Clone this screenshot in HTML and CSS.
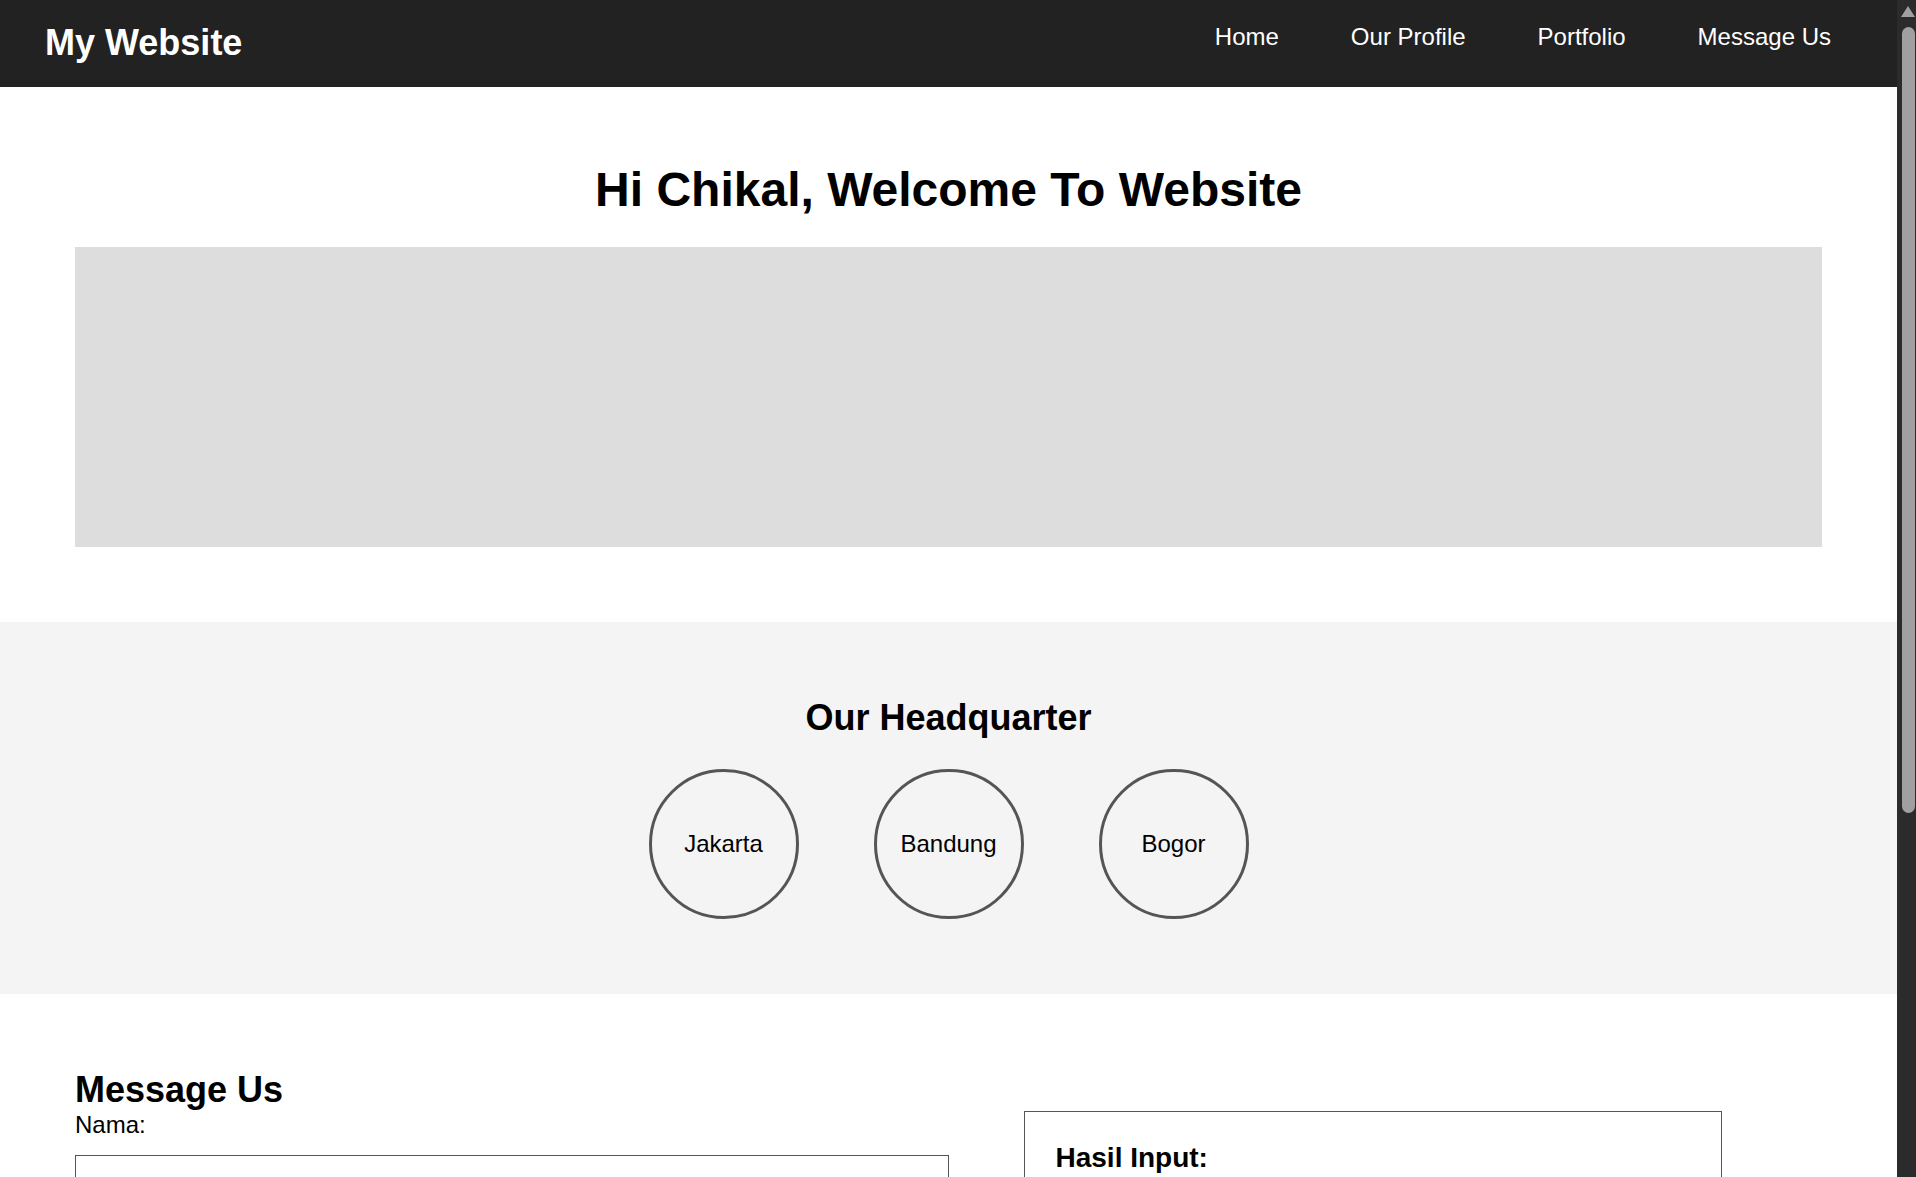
FILE: index.html
```html
<!DOCTYPE html>
<html lang="id">
<head>
<meta charset="utf-8">
<title>My Website</title>
<link rel="stylesheet" href="styles.css">
</head>
<body>
<div class="window">
  <div class="page">
    <header class="navbar">
      <div class="logo">My Website</div>
      <ul class="nav-links">
        <li><a href="#home">Home</a></li>
        <li><a href="#profile">Our Profile</a></li>
        <li><a href="#portfolio">Portfolio</a></li>
        <li><a href="#message">Message Us</a></li>
      </ul>
    </header>

    <section class="hero" id="home">
      <h1 class="hero-title">Hi Chikal, Welcome To Website</h1>
      <div class="banner"></div>
    </section>

    <section class="hq" id="profile">
      <h2 class="section-title">Our Headquarter</h2>
      <div class="hq-list">
        <div class="hq-item">Jakarta</div>
        <div class="hq-item">Bandung</div>
        <div class="hq-item">Bogor</div>
      </div>
    </section>

    <section class="message" id="message">
      <div class="form-col">
        <h2 class="form-title">Message Us</h2>
        <form class="form">
          <label class="field-label" for="nama">Nama:</label>
          <input class="field-input" type="text" id="nama">
        </form>
      </div>
      <div class="result-col">
        <h3 class="result-title">Hasil Input:</h3>
      </div>
    </section>
  </div>
  <div class="scrollbar" aria-hidden="true">
    <div class="scroll-arrow"></div>
    <div class="scroll-thumb"></div>
  </div>
</div>
</body>
</html>
```

FILE: styles.css
```css
html,
body {
  height: 100%;
  margin: 0;
  overflow: hidden;
  background: #ffffff;
}

body {
  font-family: "Liberation Sans", Arial, sans-serif;
  font-size: 24px;
  color: #000000;
}

.window {
  display: flex;
  height: 100vh;
}

.page {
  flex: 1;
  min-width: 0;
  overflow: hidden;
}

/* Scrollbar (drawn) */
.scrollbar {
  display: flex;
  flex-direction: column;
  flex: 0 0 19px;
  padding-top: 6px;
  box-sizing: border-box;
  background: #2b2b2b;
}

.scroll-arrow {
  width: 0;
  height: 0;
  margin-left: 4px;
  border-left: 7px solid transparent;
  border-right: 7px solid transparent;
  border-bottom: 11px solid #a0a0a0;
}

.scroll-thumb {
  width: 13px;
  height: 786px;
  margin: 10px 0 0 5px;
  border-radius: 7px;
  background: #a0a0a0;
}

/* Navbar */
.navbar {
  display: flex;
  justify-content: space-between;
  align-items: flex-start;
  box-sizing: border-box;
  height: 87px;
  padding: 22px 66px 0 45px;
  background: #222222;
  color: #ffffff;
}

.logo {
  font-size: 36px;
  font-weight: bold;
}

.nav-links {
  display: flex;
  gap: 72px;
  list-style: none;
  margin: 1px 0 0;
  padding: 0;
}

.nav-links a {
  color: #ffffff;
  text-decoration: none;
  font-size: 24px;
}

/* Hero */
.hero {
  padding: 75px;
}

.hero-title {
  margin: 0 0 30px;
  font-size: 48px;
  font-weight: bold;
  text-align: center;
}

.banner {
  height: 300px;
  background: #dddddd;
}

/* Headquarter */
.hq {
  padding: 75px;
  background: #f4f4f4;
  text-align: center;
}

.section-title {
  margin: 0 0 30px;
  font-size: 36px;
  font-weight: bold;
}

.hq-list {
  display: flex;
  justify-content: center;
  gap: 75px;
}

.hq-item {
  display: flex;
  align-items: center;
  justify-content: center;
  box-sizing: border-box;
  width: 150px;
  height: 150px;
  border: 3px solid #555555;
  border-radius: 50%;
  font-size: 24px;
}

/* Message */
.message {
  display: flex;
  align-items: flex-start;
  gap: 75px;
  padding: 75px;
}

.form-col {
  width: 50%;
}

.form-title {
  margin: 0;
  font-size: 36px;
  font-weight: bold;
}

.form {
  display: flex;
  flex-direction: column;
}

.field-label {
  display: block;
  font-size: 24px;
}

.field-input {
  box-sizing: border-box;
  width: 100%;
  height: 50px;
  margin: 16px 0;
  padding: 10px;
  border: 1px solid #555555;
  border-radius: 0;
  font-family: "Liberation Sans", Arial, sans-serif;
  font-size: 24px;
  background: #ffffff;
}

.result-col {
  box-sizing: border-box;
  width: 40%;
  margin-top: 42px;
  padding: 30px 31px 29px;
  border: 1px solid #555555;
}

.result-title {
  margin: 0 0 20px;
  font-size: 28px;
  font-weight: bold;
}
```
